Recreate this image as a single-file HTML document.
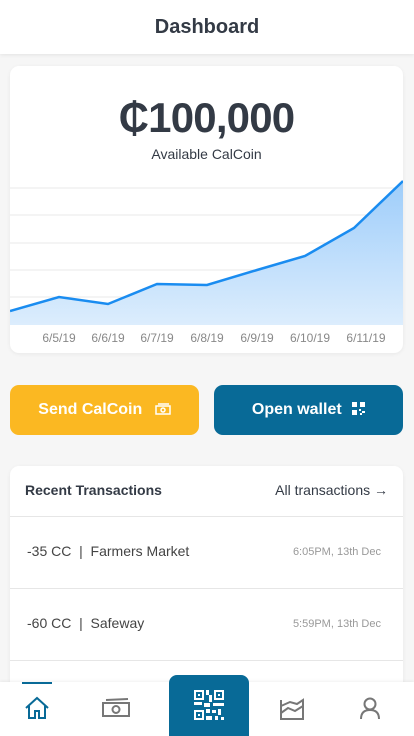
<!DOCTYPE html>
<html><head><style>
*{box-sizing:border-box;margin:0;padding:0}
html,body{width:414px;height:736px;overflow:hidden}
body{background:#f6f6f6;font-family:"Liberation Sans",sans-serif;position:relative}
.hdr{position:absolute;left:0;top:0;width:414px;height:54px;background:#fff;box-shadow:0 1px 4px rgba(0,0,0,.08);text-align:center;line-height:54px;font-weight:bold;font-size:20px;color:#333a45}
.card{position:absolute;left:10px;width:393px;background:#fff;border-radius:9px;box-shadow:0 1px 4px rgba(0,0,0,.06);overflow:hidden}
.amt{position:absolute;top:28px;width:100%;text-align:center;font-size:42px;font-weight:bold;color:#333a45;letter-spacing:-0.8px}
.sub{position:absolute;top:80px;width:100%;text-align:center;font-size:14px;color:#333a45}
.btn{position:absolute;top:385px;height:50px;border-radius:9px;color:#fff;font-weight:bold;font-size:16px;text-align:center;line-height:50px}
.row{position:absolute;left:0;width:393px;height:72px;border-top:1px solid #e6e6e6}
.row .l{position:absolute;left:17px;top:26px;font-size:14px;color:#444}
.row .r{position:absolute;right:22px;top:29px;font-size:11px;color:#999}
.nav{position:absolute;left:0;top:682px;width:414px;height:54px;background:#fff;box-shadow:0 -1px 3px rgba(0,0,0,.06)}
</style></head><body>
<div class="hdr">Dashboard</div>
<div class="card" style="top:66px;height:287px">
<div class="amt">₵100,000</div>
<div class="sub">Available CalCoin</div>
<svg style="position:absolute;left:0;top:0" width="393" height="287">
<defs><linearGradient id="g" x1="0" y1="0" x2="0" y2="1"><stop offset="0" stop-color="#9ecdfa"/><stop offset="1" stop-color="#dcedfd"/></linearGradient></defs>
<g stroke="#e8e8e8" stroke-width="1"><line x1="0" y1="122" x2="393" y2="122"/><line x1="0" y1="149" x2="393" y2="149"/><line x1="0" y1="177" x2="393" y2="177"/><line x1="0" y1="204" x2="393" y2="204"/><line x1="0" y1="231" x2="393" y2="231"/></g>
<path d="M0 245 L49 231 L98 238 L147 218 L197 219 L247 204 L295 190 L344 162 L393 115 L393 259 L0 259Z" fill="url(#g)"/>
<path d="M0 245 L49 231 L98 238 L147 218 L197 219 L247 204 L295 190 L344 162 L393 115" fill="none" stroke="#1a8cf0" stroke-width="2.5"/>
<g font-family="Liberation Sans" font-size="12" fill="#888" text-anchor="middle"><text x="49" y="276">6/5/19</text><text x="98" y="276">6/6/19</text><text x="147" y="276">6/7/19</text><text x="197" y="276">6/8/19</text><text x="247" y="276">6/9/19</text><text x="300" y="276">6/10/19</text><text x="356" y="276">6/11/19</text></g>
</svg>
</div>
<div class="btn" style="left:10px;width:189px;background:#fbb822">Send CalCoin <svg width="16" height="12" style="vertical-align:-1px;margin-left:8px" fill="none" stroke="#fff" stroke-width="1.5"><rect x="1" y="3" width="14" height="8"/><circle cx="8" cy="7" r="2"/><path d="M3 1h11"/></svg></div>
<div class="btn" style="left:214px;width:189px;background:#086a97">Open wallet <svg width="13" height="13" style="vertical-align:-1px;margin-left:6px" fill="#fff"><rect x="0" y="0" width="5" height="5"/><rect x="8" y="0" width="5" height="5"/><rect x="0" y="8" width="5" height="5"/><rect x="7" y="7" width="2" height="2"/><rect x="10" y="9" width="3" height="2"/><rect x="8" y="11" width="2" height="2"/></svg></div>
<div class="card" style="top:466px;height:270px;border-radius:9px 9px 0 0">
<div style="position:absolute;left:15px;top:16px;font-size:14px;font-weight:bold;color:#333a45">Recent Transactions</div>
<div style="position:absolute;right:15px;top:16px;font-size:14px;color:#333a45">All transactions →</div>
<div class="row" style="top:50px"><div class="l">-35 CC &nbsp;|&nbsp; Farmers Market</div><div class="r">6:05PM, 13th Dec</div></div>
<div class="row" style="top:122px"><div class="l">-60 CC &nbsp;|&nbsp; Safeway</div><div class="r">5:59PM, 13th Dec</div></div>
<div class="row" style="top:194px"></div>
</div>
<div class="nav">
<div style="position:absolute;left:22px;top:0;width:30px;height:2px;background:#086a97"></div>
<svg style="position:absolute;left:24px;top:14px" width="26" height="24" fill="none" stroke="#086a97" stroke-width="2"><path d="M2 12 L13 2 L24 12 M5 10 V22 H11 V15 H15 V22 H21 V10"/></svg>
<svg style="position:absolute;left:102px;top:16px" width="28" height="20" fill="none" stroke="#777" stroke-width="2"><rect x="1" y="5" width="26" height="13"/><circle cx="14" cy="11.5" r="3.5"/><path d="M4 2 L26 1"/></svg>
<svg style="position:absolute;left:280px;top:16px" width="24" height="22" fill="none" stroke="#777" stroke-width="2"><path d="M1 2 V21 H23 V2 L17 6 L10 4 L1 8 M1 15 L8 10 L15 13 L23 8"/></svg>
<svg style="position:absolute;left:360px;top:15px" width="20" height="22" fill="none" stroke="#777" stroke-width="2"><circle cx="10" cy="7" r="5.5"/><path d="M1 22 C1 15 5 13 10 13 C15 13 19 15 19 22"/></svg>
</div>
<div style="position:absolute;left:169px;top:675px;width:80px;height:61px;background:#086a97;border-radius:8px 8px 0 0"></div>
<svg style="position:absolute;left:194px;top:690px" width="30" height="30" fill="#fff"><path d="M0 0h10v10H0z M2 2v6h6V2z M20 0h10v10H20z M22 2v6h6V2z M0 20h10v10H0z M2 22v6h6v-6z"/><rect x="4" y="4" width="2" height="2"/><rect x="24" y="4" width="2" height="2"/><rect x="4" y="24" width="2" height="2"/><rect x="12" y="0" width="3" height="5"/><rect x="15" y="5" width="3" height="7"/><rect x="0" y="12" width="8" height="3"/><rect x="10" y="13" width="6" height="4"/><rect x="19" y="13" width="11" height="3"/><rect x="12" y="19" width="4" height="4"/><rect x="18" y="20" width="4" height="3"/><rect x="24" y="19" width="3" height="6"/><rect x="12" y="26" width="6" height="4"/><rect x="21" y="26" width="3" height="4"/><rect x="27" y="27" width="3" height="3"/></svg>
</body></html>
